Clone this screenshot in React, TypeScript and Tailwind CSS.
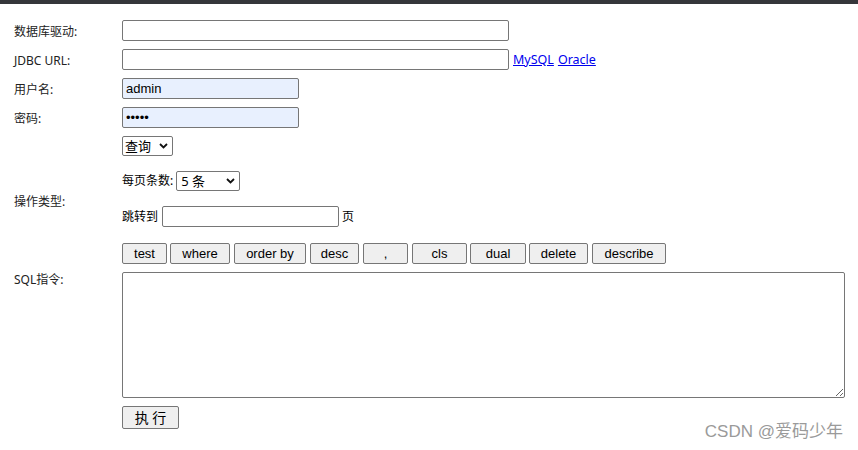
import { type ReactNode } from "react"

const cjk = "font-['Noto_Sans','Noto_Sans_CJK_SC',sans-serif]"
const ctl = "font-['Liberation_Sans','Noto_Sans_CJK_SC',sans-serif]"

const buttons = [
  { label: "test", cls: "w-[45px]" },
  { label: "where", cls: "ml-[3px] w-[60px]" },
  { label: "order by", cls: "ml-[4px] w-[72px]" },
  { label: "desc", cls: "ml-[4px] w-[49px]" },
  { label: ",", cls: "ml-[4px] w-[45px]" },
  { label: "cls", cls: "ml-[4px] w-[55px]" },
  { label: "dual", cls: "ml-[3px] w-[56px]" },
  { label: "delete", cls: "ml-[3px] w-[59px]" },
  { label: "describe", cls: "ml-[4px] w-[74px]" },
]

function Row({ label, children, top, className }: { label: string; children: ReactNode; top?: boolean; className?: string }) {
  return (
    <div className={`flex ${top ? "items-start" : "items-center"} ${className ?? ""}`}>
      <div className={`w-[108px] shrink-0 text-[12px] leading-[16px] text-[#222] ${top ? "pt-0" : "pt-[3px]"}`}>{label}</div>
      <div className="flex flex-1 items-center">{children}</div>
    </div>
  )
}

function Chevron() {
  return (
    <svg className="pointer-events-none absolute right-[5px] top-1/2 -translate-y-1/2" width="9" height="6" viewBox="0 0 9 6">
      <path d="M1 1l3.5 3.5L8 1" fill="none" stroke="#111" strokeWidth="1.8" />
    </svg>
  )
}

function Field({ className, ...rest }: React.InputHTMLAttributes<HTMLInputElement>) {
  return (
    <input
      {...rest}
      className={`block h-[21px] rounded-[2px] border border-[#767676] px-[3px] text-[13px] text-black outline-none ${ctl} ${className ?? ""}`}
    />
  )
}

export default function App() {
  return (
    <div className={`relative min-h-[450px] bg-white ${cjk}`}>
      <div className="h-[4px] bg-[#35363a]" />

      <div className="px-[14px] pt-[12px]">
        <Row label="数据库驱动:" className="h-[29px]">
          <Field className="w-[387px]" />
        </Row>
        <Row label="JDBC URL:" className="h-[29px]">
          <Field className="w-[387px]" />
          <a href="#" className="ml-[4px] text-[12.5px] leading-[16px] text-[#0000ee] underline">MySQL</a>
          <a href="#" className="ml-[4px] text-[12.5px] leading-[16px] text-[#0000ee] underline">Oracle</a>
        </Row>
        <Row label="用户名:" className="h-[29px]">
          <Field className="w-[177px] bg-[#e8f0fe]" defaultValue="admin" />
        </Row>
        <Row label="密码:" className="h-[29px]">
          <Field type="password" className="w-[177px] bg-[#e8f0fe] text-[9px]" defaultValue="12345" />
        </Row>

        <Row label="操作类型:" className="h-[136px]">
          <div className="flex flex-col pt-[4px] pb-[4px]">
            <div className="relative w-[51px]">
              <select className="block h-[20px] w-full appearance-none rounded-[2px] border border-[#767676] bg-white pl-[2px] text-[13px] leading-[18px] text-black">
                <option>查询</option>
              </select>
              <Chevron />
            </div>

            <div className="mt-[15px] flex items-center text-[12px] leading-[16px]">
              <span>每页条数:</span>
              <div className="relative ml-[3px] w-[64px]">
                <select className={`block h-[20px] w-full appearance-none rounded-[2px] border border-[#767676] bg-white pl-[4px] text-[13px] leading-[18px] text-black ${cjk}`}>
                  <option>5 条</option>
                  <option>10 条</option>
                </select>
                <Chevron />
              </div>
            </div>

            <div className="mt-[15px] flex items-center text-[12px] leading-[16px]">
              <span>跳转到</span>
              <Field className="ml-[4px] w-[177px]" />
              <span className="ml-[3px]">页</span>
            </div>

            <div className="mt-[16px] flex">
              {buttons.map((b) => (
                <button
                  key={b.label}
                  className={`block h-[21px] rounded-[2px] border border-[#767676] bg-[#efefef] text-[13px] leading-[19px] text-black ${ctl} ${b.cls}`}
                >
                  {b.label}
                </button>
              ))}
            </div>
          </div>
        </Row>

        <Row label="SQL指令:" top className="pt-[4px]">
          <textarea className="block h-[126px] w-[723px] rounded-[2px] border border-[#767676] bg-white" />
        </Row>

        <div className="ml-[108px] mt-[8px] flex">
          <button className="block h-[23px] w-[57px] rounded-[2px] border border-[#767676] bg-[#efefef] text-[14px] leading-[21px] text-black">
            执&nbsp;行
          </button>
        </div>
      </div>

      <div className={`absolute right-[15px] top-[421px] text-[17px] leading-[22px] text-[#9a9a9a] ${ctl}`}>CSDN @爱码少年</div>
    </div>
  )
}
